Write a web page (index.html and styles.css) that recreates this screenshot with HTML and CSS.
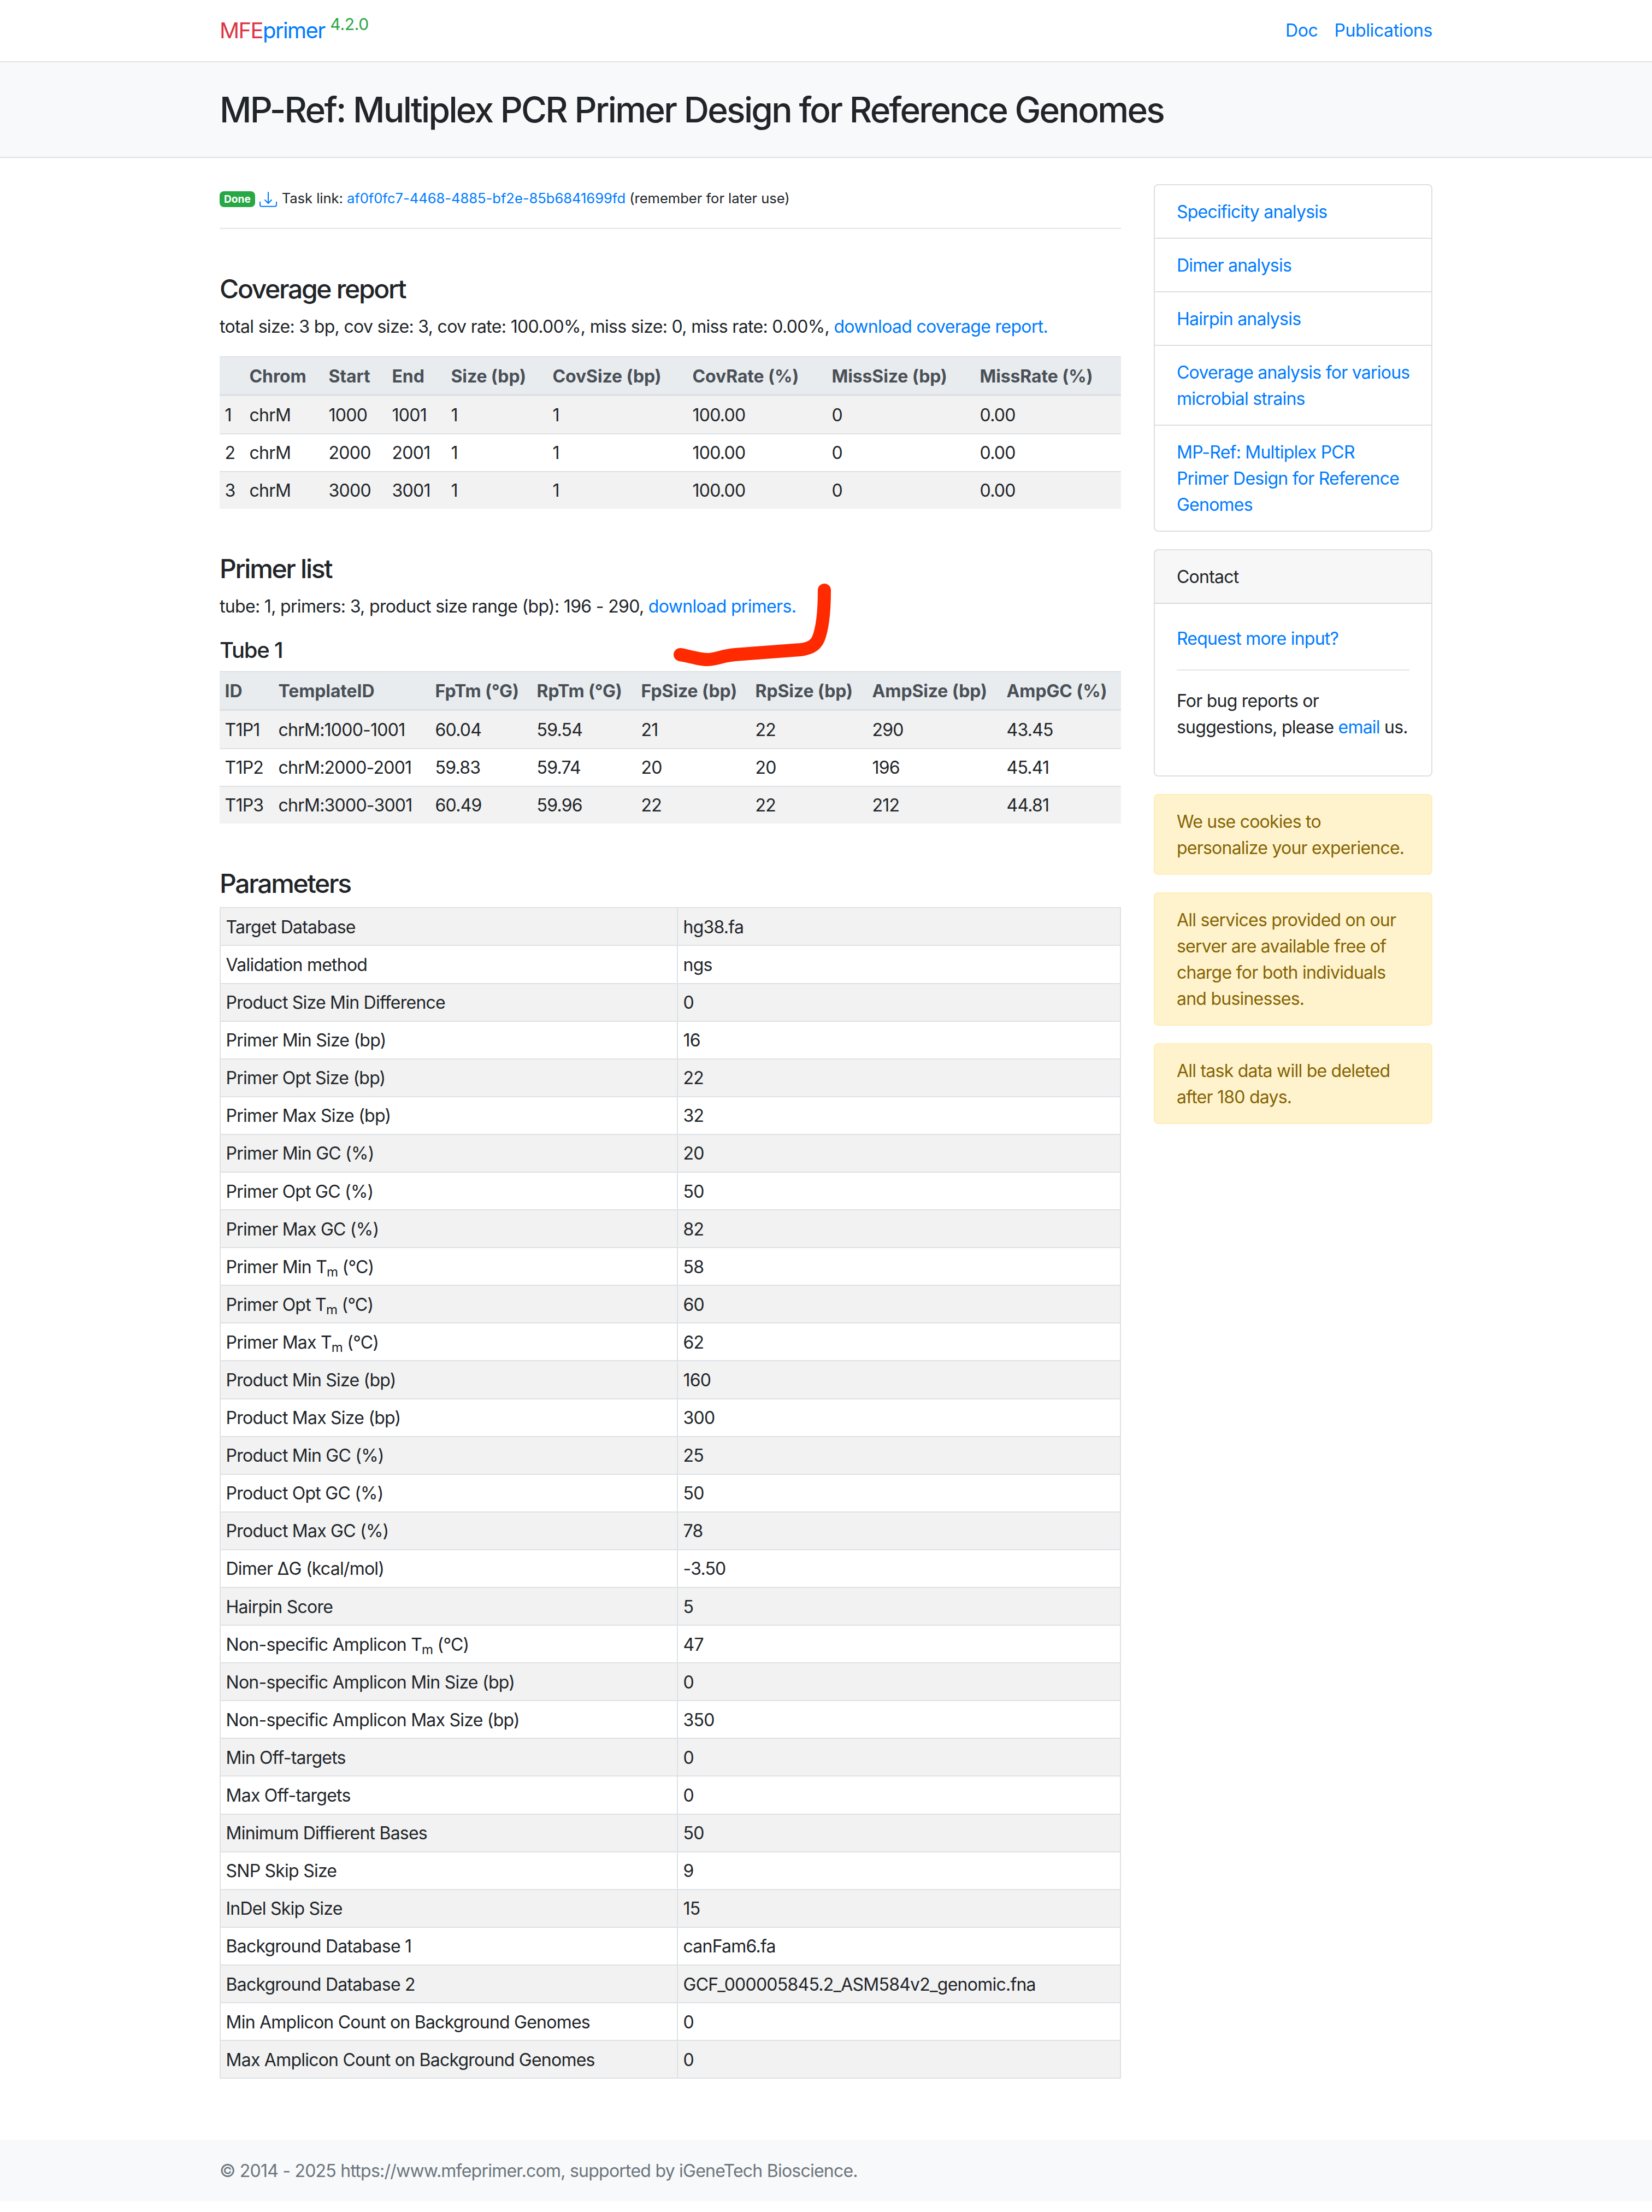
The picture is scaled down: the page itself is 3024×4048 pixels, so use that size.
FILE: index.html
```html
<!DOCTYPE html>
<html lang="en">
<head>
  <meta charset="UTF-8" />
  <meta name="viewport" content="width=device-width, initial-scale=1.0" />
  <title>MP-Ref: Multiplex PCR Primer Design for Reference Genomes</title>
  <link rel="stylesheet" href="styles.css">
</head>
<body>
  <nav class="navbar">
    <div class="container navbar-inner">
      <a class="brand" href="#"><span class="text-red">MFE</span>primer <sup class="text-green">4.2.0</sup></a>
      <div class="nav-links">
        <a href="#">Doc</a>
        <a href="#">Publications</a>
      </div>
    </div>
  </nav>

  <header class="band">
    <div class="container">
      <h2>MP-Ref: Multiplex PCR Primer Design for Reference Genomes</h2>
    </div>
  </header>

  <div class="container page">
    <main class="main">
      <p class="task">
        <span class="badge">Done</span>
        <a href="#" class="dl-icon">
          <svg viewBox="0 0 16 16" width="32" height="32" fill="currentColor">
            <path d="M.5 9.9a.5.5 0 0 1 .5.5v2.5a1 1 0 0 0 1 1h12a1 1 0 0 0 1-1v-2.5a.5.5 0 0 1 1 0v2.5a2 2 0 0 1-2 2H2a2 2 0 0 1-2-2v-2.5a.5.5 0 0 1 .5-.5z"/>
            <path d="M7.646 11.854a.5.5 0 0 0 .708 0l3-3a.5.5 0 0 0-.708-.708L8.5 10.293V1.5a.5.5 0 0 0-1 0v8.793L5.354 8.146a.5.5 0 1 0-.708.708l3 3z"/>
          </svg>
        </a>
        <small>Task link: <a href="#">af0f0fc7-4468-4885-bf2e-85b6841699fd</a> (remember for later use)</small>
      </p>
      <hr>

      <section class="section">
        <h4>Coverage report</h4>
        <p>total size: 3 bp, cov size: 3, cov rate: 100.00%, miss size: 0, miss rate: 0.00%, <a href="#">download coverage report.</a></p>
        <table class="table table-striped coverage">
          <thead>
            <tr><th></th><th>Chrom</th><th>Start</th><th>End</th><th>Size (bp)</th><th>CovSize (bp)</th><th>CovRate (%)</th><th>MissSize (bp)</th><th>MissRate (%)</th></tr>
          </thead>
          <tbody>
            <tr><td>1</td><td>chrM</td><td>1000</td><td>1001</td><td>1</td><td>1</td><td>100.00</td><td>0</td><td>0.00</td></tr>
            <tr><td>2</td><td>chrM</td><td>2000</td><td>2001</td><td>1</td><td>1</td><td>100.00</td><td>0</td><td>0.00</td></tr>
            <tr><td>3</td><td>chrM</td><td>3000</td><td>3001</td><td>1</td><td>1</td><td>100.00</td><td>0</td><td>0.00</td></tr>
          </tbody>
        </table>
      </section>

      <section class="section">
        <h4>Primer list</h4>
        <p>tube: 1, primers: 3, product size range (bp): 196 - 290, <a href="#">download primers.</a></p>
        <h5>Tube 1</h5>
        <table class="table table-striped primers">
          <thead>
            <tr><th>ID</th><th>TemplateID</th><th>FpTm (°G)</th><th>RpTm (°G)</th><th>FpSize (bp)</th><th>RpSize (bp)</th><th>AmpSize (bp)</th><th>AmpGC (%)</th></tr>
          </thead>
          <tbody>
            <tr><td>T1P1</td><td>chrM:1000-1001</td><td>60.04</td><td>59.54</td><td>21</td><td>22</td><td>290</td><td>43.45</td></tr>
            <tr><td>T1P2</td><td>chrM:2000-2001</td><td>59.83</td><td>59.74</td><td>20</td><td>20</td><td>196</td><td>45.41</td></tr>
            <tr><td>T1P3</td><td>chrM:3000-3001</td><td>60.49</td><td>59.96</td><td>22</td><td>22</td><td>212</td><td>44.81</td></tr>
          </tbody>
        </table>
      </section>

      <section class="section">
        <h4>Parameters</h4>
        <table class="table table-striped table-bordered params">
          <tbody>
            <tr><td>Target Database</td><td>hg38.fa</td></tr>
            <tr><td>Validation method</td><td>ngs</td></tr>
            <tr><td>Product Size Min Difference</td><td>0</td></tr>
            <tr><td>Primer Min Size (bp)</td><td>16</td></tr>
            <tr><td>Primer Opt Size (bp)</td><td>22</td></tr>
            <tr><td>Primer Max Size (bp)</td><td>32</td></tr>
            <tr><td>Primer Min GC (%)</td><td>20</td></tr>
            <tr><td>Primer Opt GC (%)</td><td>50</td></tr>
            <tr><td>Primer Max GC (%)</td><td>82</td></tr>
            <tr><td>Primer Min T<sub>m</sub> (°C)</td><td>58</td></tr>
            <tr><td>Primer Opt T<sub>m</sub> (°C)</td><td>60</td></tr>
            <tr><td>Primer Max T<sub>m</sub> (°C)</td><td>62</td></tr>
            <tr><td>Product Min Size (bp)</td><td>160</td></tr>
            <tr><td>Product Max Size (bp)</td><td>300</td></tr>
            <tr><td>Product Min GC (%)</td><td>25</td></tr>
            <tr><td>Product Opt GC (%)</td><td>50</td></tr>
            <tr><td>Product Max GC (%)</td><td>78</td></tr>
            <tr><td>Dimer ΔG (kcal/mol)</td><td>-3.50</td></tr>
            <tr><td>Hairpin Score</td><td>5</td></tr>
            <tr><td>Non-specific Amplicon T<sub>m</sub> (°C)</td><td>47</td></tr>
            <tr><td>Non-specific Amplicon Min Size (bp)</td><td>0</td></tr>
            <tr><td>Non-specific Amplicon Max Size (bp)</td><td>350</td></tr>
            <tr><td>Min Off-targets</td><td>0</td></tr>
            <tr><td>Max Off-targets</td><td>0</td></tr>
            <tr><td>Minimum Diffierent Bases</td><td>50</td></tr>
            <tr><td>SNP Skip Size</td><td>9</td></tr>
            <tr><td>InDel Skip Size</td><td>15</td></tr>
            <tr><td>Background Database 1</td><td>canFam6.fa</td></tr>
            <tr><td>Background Database 2</td><td>GCF_000005845.2_ASM584v2_genomic.fna</td></tr>
            <tr><td>Min Amplicon Count on Background Genomes</td><td>0</td></tr>
            <tr><td>Max Amplicon Count on Background Genomes</td><td>0</td></tr>
          </tbody>
        </table>
      </section>
    </main>

    <aside class="sidebar">
      <div class="list-group">
        <a class="list-item" href="#">Specificity analysis</a>
        <a class="list-item" href="#">Dimer analysis</a>
        <a class="list-item" href="#">Hairpin analysis</a>
        <a class="list-item nowrap" href="#">Coverage analysis for various<br>microbial strains</a>
        <a class="list-item" href="#">MP-Ref: Multiplex PCR Primer Design for Reference Genomes</a>
      </div>

      <div class="card">
        <div class="card-header">Contact</div>
        <div class="card-body">
          <a href="#">Request more input?</a>
          <hr>
          <p>For bug reports or suggestions, please <a href="#">email</a> us.</p>
        </div>
      </div>

      <div class="alert">We use cookies to personalize your experience.</div>
      <div class="alert">All services provided on our server are available free of charge for both individuals and businesses.</div>
      <div class="alert">All task data will be deleted after 180 days.</div>
    </aside>
  </div>

  <footer class="footer">
    <div class="container">© 2014 - 2025 https://www.mfeprimer.com, supported by iGeneTech Bioscience.</div>
  </footer>

  <!-- red pen mark over the page -->
  <svg class="pen-mark" viewBox="0 0 300 160" width="300" height="160">
    <path d="M15 133 C30 135 48 142 65 142 C80 142 92 135 115 133 C145 131 190 127 235 124 C250 122 262 118 268 104 C276 84 279 50 279 15" fill="none" stroke="#ff2a00" stroke-width="24" stroke-linecap="round" stroke-linejoin="round"/>
  </svg>
</body>
</html>
```

FILE: styles.css
```css
html {
  font-size: 32px;
}
body {
  position: relative;
  margin: 0;
  font-family: Inter, "Noto Sans", sans-serif;
  font-size: 1rem;
  line-height: 1.5;
  letter-spacing: -0.021em;
  color: #212529;
  background: #fff;
}
a {
  color: #007bff;
  text-decoration: none;
}
p {
  margin: 0 0 1rem;
}
h2, h4, h5 {
  margin: 0 0 0.5rem;
  font-weight: 500;
  line-height: 1.2;
  letter-spacing: -0.048em;
}
h2 { font-size: 2rem; margin: 0; letter-spacing: -0.042em; }
h4 { font-size: 1.5rem; }
h5 { font-size: 1.25rem; letter-spacing: -0.03em; }
hr {
  margin: 1rem 0;
  border: 0;
  border-top: 2px solid rgba(0, 0, 0, 0.1);
}
small {
  font-size: 80%;
  letter-spacing: -0.002em;
}
sub {
  font-size: 75%;
  line-height: 0;
  position: relative;
  bottom: -0.25em;
  vertical-align: baseline;
}

.container {
  width: 2220px;
  margin: 0 auto;
}
.text-red { color: #dc3545; }
.text-green { color: #28a745; }

/* navbar */
.navbar {
  height: 112px;
  border-bottom: 2px solid #dee2e6;
}
.navbar-inner {
  display: flex;
  align-items: center;
  justify-content: space-between;
  height: 100%;
}
.brand {
  font-size: 1.25rem;
  line-height: 1.5;
  letter-spacing: -0.04em;
}
.brand sup {
  font-size: 75%;
  line-height: 0;
  letter-spacing: -0.01em;
  position: relative;
  top: -0.5em;
  vertical-align: baseline;
}
.nav-links {
  display: flex;
  gap: 30px;
  letter-spacing: -0.012em;
}

/* title band */
.band {
  padding: 49px 0 47px;
  background: #f8f9fa;
  border-bottom: 2px solid #dee2e6;
}

/* two columns */
.page {
  display: flex;
  gap: 60px;
  padding-top: 48px;
}
.main {
  width: 1650px;
  flex-shrink: 0;
}
.sidebar {
  flex: 1;
  min-width: 0;
  letter-spacing: -0.024em;
}
.task {
  margin: 0;
}
.badge {
  display: inline-block;
  padding: 5px 8px;
  font-size: 19.2px;
  font-weight: 700;
  line-height: 1;
  letter-spacing: 0;
  color: #fff;
  background: #28a745;
  border-radius: 8px;
  vertical-align: 1px;
}
.dl-icon svg {
  vertical-align: -9px;
}
.section {
  padding-top: 48px;
}
.section h4 {
  padding-top: 1px;
  margin-bottom: 15px;
}
.section h5 {
  padding-top: 2px;
  margin-bottom: 14px;
}
.section p {
  padding-top: 2px;
  margin-bottom: 30px;
}

/* tables */
.table {
  width: 100%;
  margin-bottom: 1rem;
  border-collapse: collapse;
  table-layout: fixed;
}
.table th,
.table td {
  box-sizing: border-box;
  padding: 10.55px 9.55px 8.55px;
  text-align: left;
  vertical-align: top;
  white-space: nowrap;
  letter-spacing: -0.024em;
  border-top: 2px solid #dee2e6;
}
.table thead th {
  font-weight: 700;
  letter-spacing: -0.004em;
  color: #495057;
  background: #e9ecef;
  border-bottom: 4px solid #dee2e6;
}
.table-striped tbody tr:nth-child(odd) {
  background: #f2f2f2;
}
.table-bordered td {
  border: 2px solid #dee2e6;
}
.coverage th:nth-child(1) { width: 45px; }
.coverage th:nth-child(2) { width: 145px; }
.coverage th:nth-child(3) { width: 116px; }
.coverage th:nth-child(4) { width: 108px; }
.coverage th:nth-child(5) { width: 186px; }
.coverage th:nth-child(6) { width: 256px; }
.coverage th:nth-child(7) { width: 255px; }
.coverage th:nth-child(8) { width: 271px; }
.primers th:nth-child(1) { width: 98px; }
.primers th:nth-child(2) { width: 287px; }
.primers th:nth-child(3) { width: 186px; }
.primers th:nth-child(4) { width: 191px; }
.primers th:nth-child(5) { width: 209px; }
.primers th:nth-child(6) { width: 214px; }
.primers th:nth-child(7) { width: 246px; }
.params td:first-child { width: 837px; }

/* sidebar */
.list-group,
.card {
  margin-bottom: 1rem;
  border: 2px solid rgba(0, 0, 0, 0.125);
  border-radius: 8px;
}
.list-item {
  display: block;
  padding: 25px 40px 23px;
}
.list-item + .list-item {
  border-top: 2px solid rgba(0, 0, 0, 0.125);
}
.nowrap {
  white-space: nowrap;
}
.card-header {
  padding: 25px 40px 23px;
  background: rgba(0, 0, 0, 0.03);
  border-bottom: 2px solid rgba(0, 0, 0, 0.125);
}
.card-body {
  padding: 40px 40px 64px;
}
.card-body p {
  margin: 0;
}
.alert {
  margin-bottom: 1rem;
  padding: 25px 40px 23px;
  color: #856404;
  background: #fff3cd;
  border: 2px solid #ffeeba;
  border-radius: 8px;
}

/* footer */
.footer {
  margin: 80px 0 19px;
  padding: 33px 0 31px;
  letter-spacing: -0.024em;
  color: #6c757d;
  background: #f8f9fa;
}

.pen-mark {
  position: absolute;
  left: 1230px;
  top: 1065px;
}
```
